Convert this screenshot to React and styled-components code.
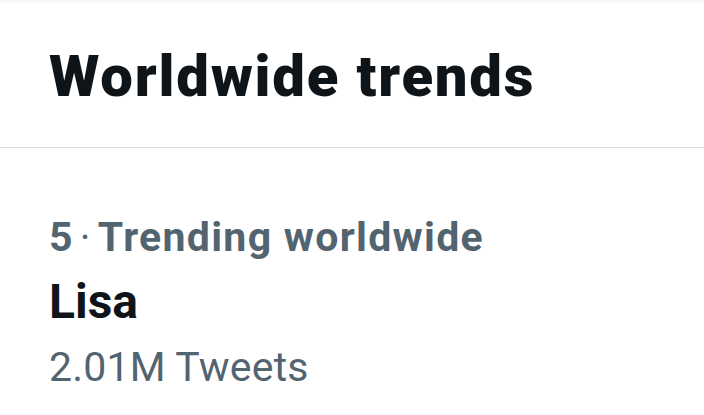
import styled, { createGlobalStyle } from 'styled-components';

const GlobalStyle = createGlobalStyle`
	html, body {
		margin: 0;
		padding: 0;
		background: #fff;
	}
	body {
		font-family: Roboto, "Liberation Sans", sans-serif;
		color: #0f1419;
	}
`;

const Panel = styled.div`
	width: 704px;
	height: 415px;
	overflow: hidden;
	background: #fff;
`;

const TopShade = styled.div`
	height: 4px;
	background: linear-gradient(#f4f5f6, #fff);
`;

const Header = styled.div`
	padding: 43px 0 42px 49px;
	border-bottom: 1px solid #dcdcdc;
`;

const Title = styled.h2`
	margin: 0;
	font-size: 58px;
	line-height: 58px;
	font-weight: 900;
	letter-spacing: 1.8px;
	color: #0f1419;
`;

const Trend = styled.div`
	padding: 65px 0 0 49px;
	display: flex;
	flex-direction: column;
`;

const Meta = styled.div`
	font-size: 41px;
	line-height: 48px;
	font-weight: ${(p) => (p.$bold ? 700 : 400)};
	letter-spacing: ${(p) => (p.$bold ? 1.3 : 0.2)}px;
	color: #536471;
	margin-top: ${(p) => p.$gap || 0}px;
`;

const Dot = styled.span`
	font-weight: 400;
	margin: 0 6px;
`;

const Name = styled.div`
	margin-top: 12px;
	font-size: 48px;
	line-height: 58px;
	font-weight: 700;
	color: #0f1419;
`;

export default function App() {
	return (
		<Panel>
			<GlobalStyle />
			<TopShade />
			<Header>
				<Title>Worldwide trends</Title>
			</Header>
			<Trend>
				<Meta $bold>
					5<Dot>·</Dot>Trending worldwide
				</Meta>
				<Name>Lisa</Name>
				<Meta $gap={12}>2.01M Tweets</Meta>
			</Trend>
		</Panel>
	);
}
